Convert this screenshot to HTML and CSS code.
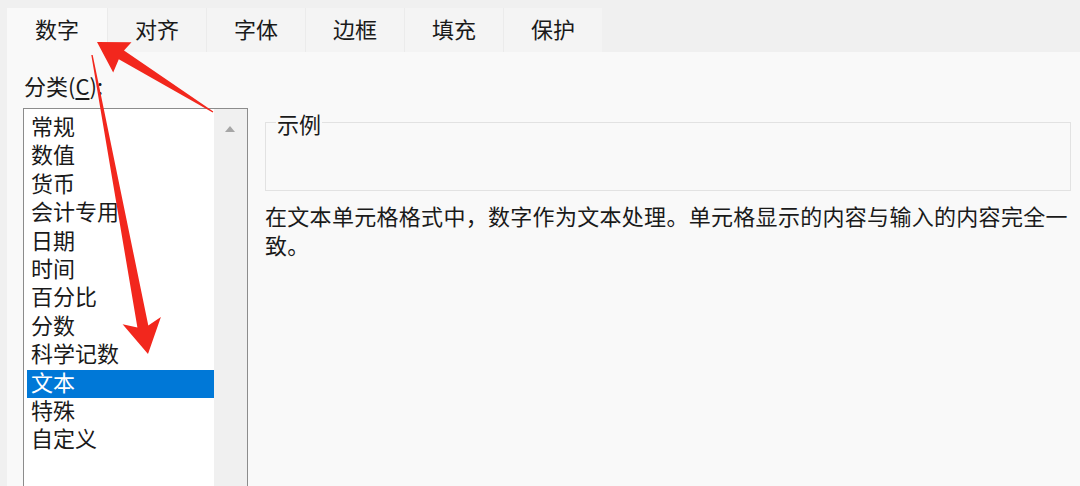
FILE: index.html
```html
<!DOCTYPE html>
<html lang="zh-CN">
<head>
    <meta charset="UTF-8">
    <meta name="viewport" content="width=device-width, initial-scale=1.0">
    <title>设置单元格格式</title>
    <link rel="stylesheet" href="styles.css">
</head>
<body>
    <div class="dialog">
        <nav class="tabs">
            <div class="tab active">数字</div>
            <div class="tab">对齐</div>
            <div class="tab">字体</div>
            <div class="tab">边框</div>
            <div class="tab">填充</div>
            <div class="tab">保护</div>
        </nav>
        <main class="panel">
            <section class="left">
                <div class="label">分类(<u>C</u>):</div>
                <div class="listbox">
                    <ul class="items">
                        <li>常规</li>
                        <li>数值</li>
                        <li>货币</li>
                        <li>会计专用</li>
                        <li>日期</li>
                        <li>时间</li>
                        <li>百分比</li>
                        <li>分数</li>
                        <li>科学记数</li>
                        <li class="selected">文本</li>
                        <li>特殊</li>
                        <li>自定义</li>
                    </ul>
                    <div class="scrollbar">
                        <div class="arrow-up"></div>
                    </div>
                </div>
            </section>
            <section class="right">
                <div class="sample">
                    <span class="legend">示例</span>
                </div>
                <p class="desc">在文本单元格格式中，数字作为文本处理。单元格显示的内容与输入的内容完全一致。</p>
            </section>
        </main>
    </div>

    <!-- annotation arrows drawn over the dialog -->
    <svg class="marks" width="1080" height="486" viewBox="0 0 1080 486">
        <polygon points="213.3,111.5 124,50.6 131.5,42.2 97,42 113.2,72.5 118.8,59.2 212.7,112.5" />
        <polygon points="92.7,54.9 148.3,325.5 160.9,317 148,354 122.6,324.2 137.4,327.5 91.3,55.1" />
    </svg>
</body>
</html>
```

FILE: styles.css
```css
body {
    margin: 0;
    padding: 0;
    width: 1080px;
    height: 486px;
    overflow: hidden;
    background: #f0f0f0;
    font-family: "Noto Sans CJK SC", "Microsoft YaHei", sans-serif;
    font-size: 22px;
    color: #1a1a1a;
    position: relative;
}

.dialog {
    display: flex;
    flex-direction: column;
    height: 486px;
}

.tabs {
    display: flex;
    padding: 8px 0 0 7px;
    height: 44px;
}

.tab {
    flex: 0 0 98px;
    height: 40px;
    padding-bottom: 4px;
    line-height: 40px;
    text-align: center;
    background: #f4f4f4;
    border-left: 1px solid #ebebeb;
}

.tab.active {
    flex-basis: 100px;
    background: #f9f9f9;
    border-left: none;
}

.panel {
    flex: 1;
    display: flex;
    margin-left: 7px;
    background: #f9f9f9;
}

.left {
    width: 225px;
    padding-left: 16px;
}

.label {
    margin-top: 21px;
    margin-left: 1px;
    height: 24px;
    line-height: 24px;
}

.label u {
    text-underline-offset: 3px;
}

.listbox {
    display: flex;
    margin-top: 11px;
    height: 400px;
    border: 1px solid #8c8c8c;
    background: #fff;
}

.items {
    list-style: none;
    margin: 0;
    padding: 2px 0 0 0;
    width: 190px;
}

.items li {
    height: 28.4px;
    line-height: 28.4px;
    margin-left: 3px;
    padding-left: 4px;
}

.items li.selected {
    background: #0078d7;
    color: #fff;
    margin-top: 3px;
    margin-bottom: -3px;
    line-height: 22.4px;
    padding-bottom: 6px;
    height: 22.4px;
}

.scrollbar {
    width: 33px;
    background: #f0f0f0;
    display: flex;
    justify-content: center;
}

.arrow-up {
    width: 0;
    height: 0;
    margin-top: 17px;
    margin-right: 2px;
    border-left: 5px solid transparent;
    border-right: 5px solid transparent;
    border-bottom: 6px solid #a6a6a6;
}

.right {
    flex: 1;
    padding-left: 17px;
}

.sample {
    margin-top: 70px;
    width: 804px;
    height: 67px;
    border: 1px solid #e2e2e2;
}

.legend {
    display: inline-block;
    margin: -12px 0 0 10px;
    padding: 0 1px;
    height: 24px;
    line-height: 24px;
    background: #f9f9f9;
    vertical-align: top;
}

.desc {
    margin: 10px 0 0 0;
    width: 806px;
    line-height: 29px;
    letter-spacing: 0.3px;
}

.marks {
    position: absolute;
    top: 0;
    left: 0;
    pointer-events: none;
}

.marks polygon {
    fill: #f2271d;
}
```
